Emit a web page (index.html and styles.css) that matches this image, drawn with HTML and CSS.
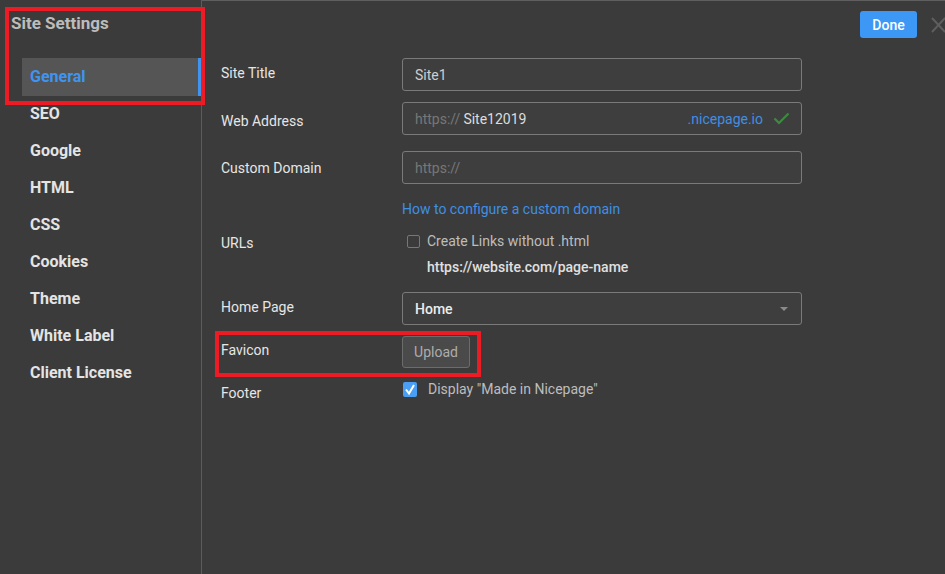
FILE: index.html
```html
<!DOCTYPE html>
<html>
<head>
<meta charset="utf-8">
<link rel="stylesheet" href="styles.css">
</head>
<body>
<div class="app">
  <aside class="sidebar">
    <div class="title">Site Settings</div>
    <nav class="nav">
      <div class="nav-item active">General</div>
      <div class="nav-item">SEO</div>
      <div class="nav-item">Google</div>
      <div class="nav-item">HTML</div>
      <div class="nav-item">CSS</div>
      <div class="nav-item">Cookies</div>
      <div class="nav-item">Theme</div>
      <div class="nav-item">White Label</div>
      <div class="nav-item">Client License</div>
    </nav>
  </aside>
  <main class="main">
    <div class="header">
      <button class="done">Done</button>
      <svg class="close" width="14" height="16" viewBox="0 0 14 16"><path d="M1 1 L14 15 M14 1 L1 15" stroke="#5e5e5e" stroke-width="2" fill="none"/></svg>
    </div>
    <div class="form">
      <div class="row r-title">
        <div class="label">Site Title</div>
        <div class="input"><span class="val">Site1</span></div>
      </div>
      <div class="row r-web">
        <div class="label">Web Address</div>
        <div class="input"><span class="ph">https://</span><span class="val sub">Site12019</span><span class="domain">.nicepage.io</span>
          <svg class="ok" width="17" height="13" viewBox="0 0 17 13"><path d="M1.5 6.5 L6 11 L15.5 1.5" stroke="#3d8b40" stroke-width="2.2" fill="none"/></svg>
        </div>
      </div>
      <div class="row r-custom">
        <div class="label">Custom Domain</div>
        <div class="input"><span class="ph">https://</span></div>
      </div>
      <div class="row r-link">
        <div class="label"></div>
        <a class="link">How to configure a custom domain</a>
      </div>
      <div class="row r-urls">
        <div class="label">URLs</div>
        <div class="check-row"><span class="box"></span><span class="check-text">Create Links without .html</span></div>
      </div>
      <div class="row r-urltext">
        <div class="label"></div>
        <div class="url-text">https://website.com/page-name</div>
      </div>
      <div class="row r-home">
        <div class="label">Home Page</div>
        <div class="input select"><span class="val strong">Home</span><span class="arrow"></span></div>
      </div>
      <div class="row r-fav">
        <div class="label">Favicon</div>
        <button class="upload">Upload</button>
      </div>
      <div class="row r-footer">
        <div class="label">Footer</div>
        <div class="check-row checked"><span class="box on"><svg width="14" height="15" viewBox="0 0 14 15"><path d="M3 7.5 L6 11.5 L11 3" stroke="#fff" stroke-width="2" fill="none"/></svg></span><span class="check-text">Display "Made in Nicepage"</span></div>
      </div>
    </div>
  </main>
</div>
<div class="mark mark-1"></div>
<div class="mark mark-2"></div>
</body>
</html>
```
FILE: styles.css
```css
* { box-sizing: border-box; }
html, body { margin: 0; padding: 0; }
body {
  width: 945px;
  height: 574px;
  overflow: hidden;
  background: #3b3b3b;
  font-family: Roboto, "Liberation Sans", sans-serif;
  color: #e6e6e6;
  position: relative;
}
.app { display: flex; height: 574px; }
.sidebar {
  width: 202px;
  flex: none;
  border-right: 1px solid #5c5c5c;
}
.title {
  padding: 13px 0 0 11px;
  height: 58px;
  font-size: 17px;
  font-weight: 700;
  color: #bcbcbc;
  line-height: 20px;
}
.nav { display: flex; flex-direction: column; }
.nav-item {
  margin-left: 22px;
  padding-left: 8px;
  height: 37px;
  line-height: 37px;
  font-size: 16px;
  font-weight: 700;
  color: #e4e4e4;
}
.nav-item.active {
  height: 38px;
  line-height: 37px;
  margin-bottom: -1px;
  background: #555555;
  color: #3f94f0;
  border-right: 3px solid #3f94f0;
}
.main {
  flex: 1;
  border-top: 1px solid #5f5f5f;
  overflow: hidden;
}
.header {
  display: flex;
  justify-content: flex-end;
  align-items: center;
  padding-top: 10px;
  height: 37px;
}
.done {
  width: 57px;
  height: 27px;
  border: none;
  border-radius: 3px;
  background: #3d97f5;
  color: #fff;
  font-family: Roboto, "Liberation Sans", sans-serif;
  font-size: 14px;
  font-weight: 500;
  padding: 0;
}
.close { margin-left: 14px; flex: none; }
.form { padding: 20px 0 0 19px; }
.row { display: flex; align-items: center; }
.label {
  width: 181px;
  flex: none;
  font-size: 14px;
  color: #e6e6e6;
}
.r-title .label { margin-top: -4px; }
.input {
  width: 400px;
  height: 33px;
  border: 1px solid #7a7a7a;
  border-radius: 3px;
  background: #3e3e3e;
  display: flex;
  align-items: center;
  padding: 0 12px;
  font-size: 14px;
}
.val { color: #cfcfcf; }
.val.sub { color: #dcdcdc; margin-left: 3px; }
.val.strong { color: #ececec; font-weight: 500; }
.ph { color: #777; }
.domain { margin-left: auto; color: #3f8fe3; }
.ok { margin-left: 10px; margin-right: -1px; }
.r-web { margin-top: 11px; }
.r-web .label { padding-top: 5px; }
.r-custom { margin-top: 16px; }
.r-link { margin-top: 16px; height: 18px; }
.link { font-size: 14px; color: #3f8fe3; line-height: 18px; }
.r-urls { margin-top: 14px; height: 18px; }
.r-urls .label { padding-top: 4px; }
.check-row { display: flex; align-items: center; font-size: 14px; }
.box {
  width: 13px;
  height: 13px;
  border: 1px solid #777;
  border-radius: 2px;
  margin-left: 5px;
  margin-right: 7px;
}
.check-text { color: #bdbdbd; }
.r-urltext { margin-top: 8px; height: 18px; }
.url-text { margin-left: 25px; font-size: 14px; font-weight: 500; color: #e0e0e0; }
.r-home { margin-top: 16px; }
.r-home .label { margin-top: -4px; }
.select { position: relative; }
.arrow {
  margin-left: auto;
  margin-right: 1px;
  width: 0; height: 0;
  border-left: 4px solid transparent;
  border-right: 4px solid transparent;
  border-top: 4px solid #8a8a8a;
}
.r-fav { margin-top: 11px; }
.r-fav .label { margin-top: -4px; }
.upload {
  width: 68px;
  height: 32px;
  border: 1px solid #6c6c6c;
  border-radius: 3px;
  background: #4a4a4a;
  color: #adadad;
  font-family: Roboto, "Liberation Sans", sans-serif;
  font-size: 14px;
  padding: 0;
}
.r-footer { margin-top: 12px; height: 18px; align-items: center; }
.r-footer .label { padding-top: 8px; }
.box.on {
  width: 14px;
  height: 15px;
  border: none;
  background: #4a9ff5;
  margin-left: 1px;
  margin-right: 11px;
  display: flex;
}
.mark {
  position: absolute;
  border: 4px solid #ed1c24;
  pointer-events: none;
}
.mark-1 { left: 5px; top: 7px; width: 200px; height: 98px; }
.mark-2 { left: 215px; top: 331px; width: 266px; height: 46px; }
```
